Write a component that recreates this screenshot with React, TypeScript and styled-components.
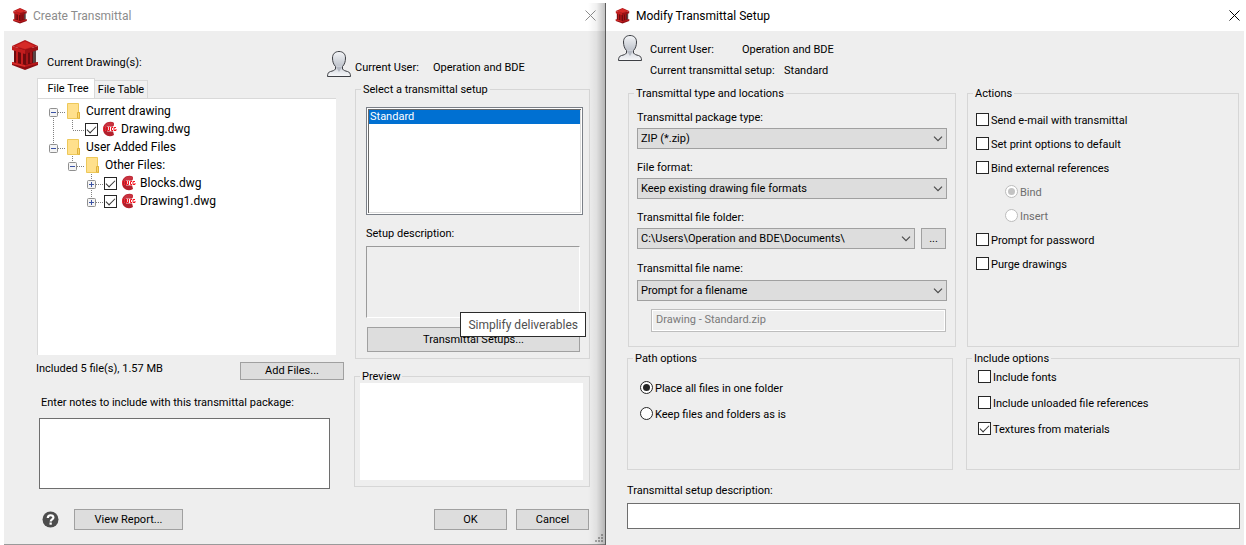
import React from "react";
import styled, { createGlobalStyle, css } from "styled-components";

const UI_FONT = `Roboto, "Noto Sans", sans-serif`;

const GlobalStyle = createGlobalStyle`
  *, *::before, *::after { box-sizing: border-box; }
  body {
    margin: 0;
    background: #fff;
    color: #000;
    font: 11px/16px ${UI_FONT};
  }
  button, input, select, textarea { font: inherit; color: inherit; margin: 0; border-radius: 0; }
`;

/* ---------- windows ---------- */

const Desktop = styled.main`
  display: flex;
  min-height: 100vh;
`;

const Window = styled.section<{ $grow: number }>`
  flex: ${(p) => p.$grow} 1 0;
  min-width: 0;
  display: flex;
  flex-direction: column;
`;

const BackWindow = styled(Window)`
  position: relative;
  padding-left: 4px;
  &::after {
    content: "";
    position: absolute;
    top: 3px;
    right: 0;
    bottom: 0;
    width: 18px;
    border-right: 1px solid #5c5c5c;
    background: linear-gradient(to right, rgba(0, 0, 0, 0), rgba(0, 0, 0, 0.06) 50%, rgba(0, 0, 0, 0.24));
    pointer-events: none;
  }
`;

const FrontWindow = styled(Window)`
  padding-right: 2px;
`;

const TitleBar = styled.header<{ $inactive?: boolean }>`
  display: flex;
  align-items: center;
  gap: 6px;
  height: 31px;
  padding: 0 ${(p) => (p.$inactive ? 10 : 4)}px 0 9px;
  font-size: 12px;
  color: ${(p) => (p.$inactive ? "#8c8c8c" : "#000")};
`;

const Title = styled.h1`
  flex: 1;
  margin: 0;
  font: inherit;
`;

const CloseButton = styled.button`
  display: flex;
  padding: 0;
  border: 0;
  background: none;
`;

const Body = styled.div`
  flex: 1;
  background: #eeeeee;
`;

const BackBody = styled(Body)`
  border-bottom: 1px solid #9a9a9a;
`;

/* ---------- shared controls ---------- */

const Button = styled.button<{ $width?: number; $height?: number }>`
  width: ${(p) => (p.$width ? `${p.$width}px` : "auto")};
  height: ${(p) => p.$height ?? 21}px;
  padding: 0;
  border: 1px solid #a0a0a0;
  background: #dddddd;
  text-align: center;
`;

const Group = styled.fieldset`
  min-width: 0;
  margin: 0;
  padding: 0 5px;
  border: 1px solid #d6d6d6;
`;

const Legend = styled.legend`
  padding: 0 2px;
  height: 14px;
`;

const Caption = styled.label`
  display: block;
  height: 14px;
`;

const markBase = css`
  appearance: none;
  flex: none;
  display: grid;
  place-items: center;
  width: 13px;
  height: 13px;
  background: #fff;
  border: 1px solid #262626;
`;

const CheckBox = styled.input.attrs({ type: "checkbox" })`
  ${markBase}
  &:checked::after {
    content: "";
    width: 9px;
    height: 5px;
    border: solid #333;
    border-width: 0 0 1px 1px;
    transform: translate(0, -1px) rotate(-45deg);
  }
`;

const Radio = styled.input.attrs({ type: "radio" })`
  ${markBase}
  border-radius: 50%;
  &:checked::after {
    content: "";
    width: 7px;
    height: 7px;
    border-radius: 50%;
    background: #262626;
  }
  &:disabled { border-color: #bcbcbc; }
  &:disabled::after { background: #c3c3c3; }
`;

const OptionLabel = styled.label<{ $indent?: boolean; $disabled?: boolean }>`
  display: flex;
  align-items: flex-start;
  gap: 2px;
  height: 14px;
  margin-left: ${(p) => (p.$indent ? 29 : 0)}px;
  color: ${(p) => (p.$disabled ? "#6d6d6d" : "inherit")};
`;

const OptionList = styled.div<{ $gap: number; $top: number; $left: number }>`
  display: flex;
  flex-direction: column;
  gap: ${(p) => p.$gap}px;
  padding: ${(p) => p.$top}px 0 0 ${(p) => p.$left}px;
`;

const SelectFrame = styled.div`
  flex: 1;
  display: grid;
  align-items: center;
  > * { grid-area: 1 / 1; }
  > svg { justify-self: end; margin-right: 4px; pointer-events: none; }
`;

const Select = styled.select`
  appearance: none;
  width: 100%;
  height: 21px;
  padding: 0 20px 0 3px;
  border: 1px solid #a0a0a0;
  background: #dddddd;
`;

/* ---------- create transmittal ---------- */

const CreateHeader = styled.div`
  display: grid;
  grid-template-columns: 315fr 263fr;
  height: 47px;
  padding: 9px 16px 0 8px;
`;

const DrawingHeading = styled.div`
  display: flex;
  gap: 9px;
  span { padding-top: 15px; }
`;

const UserHeading = styled.div`
  display: flex;
  gap: 4px;
  padding-top: 11px;
`;

const Facts = styled.dl`
  margin: 0;
  padding-top: 9px;
`;

const Fact = styled.div<{ $label: number }>`
  display: grid;
  grid-template-columns: ${(p) => p.$label}px auto;
  height: 14px;
  dd { margin: 0; }
`;

const CreateColumns = styled.div`
  display: grid;
  grid-template-columns: 350fr 236fr;
  padding-right: 16px;
`;

const Tabs = styled.div`
  display: flex;
  align-items: flex-end;
  margin-left: 33px;
`;

const Tab = styled.button<{ $active?: boolean }>`
  width: ${(p) => (p.$active ? 58 : 53)}px;
  height: ${(p) => (p.$active ? 20 : 18)}px;
  padding: ${(p) => (p.$active ? "0 0 0 4px" : "0")};
  border: 1px solid #d9d9d9;
  border-width: ${(p) => (p.$active ? "1px 1px 0 1px" : "1px 1px 0 0")};
  background: ${(p) => (p.$active ? "#fff" : "#f0f0f0")};
  white-space: nowrap;
`;

const TreePanel = styled.div`
  height: 257px;
  margin: 0 18px 0 33px;
  padding: 3px 0 0 6px;
  border: solid #d9d9d9;
  border-width: 1px 0 0 1px;
  background: #fff;
  font-size: 12px;
  line-height: 18px;
`;

const TreeRow = styled.div`
  display: flex;
  align-items: center;
  height: 18px;
`;

const TreeItem = styled.label<{ $folder?: boolean }>`
  display: flex;
  align-items: center;
  gap: ${(p) => (p.$folder ? 6 : 4)}px;
  margin-left: ${(p) => (p.$folder ? 4 : 3)}px;
`;

const StatusRow = styled.div`
  display: flex;
  justify-content: space-between;
  padding: 7px 10px 0 32px;
  line-height: 14px;
`;

const NotesField = styled.div`
  display: flex;
  flex-direction: column;
  gap: 9px;
  padding: 15px 24px 0 35px;
  label { padding-left: 2px; }
`;

const Notes = styled.textarea`
  width: 100%;
  height: 71px;
  resize: none;
  border: 1px solid #6e6e6e;
  background: #fff;
`;

const SetupColumn = styled.div`
  display: flex;
  flex-direction: column;
  gap: 10px;
  padding-top: 4px;
`;

const SetupGroup = styled(Group)`
  height: 277px;
  margin-left: 1px;
`;

const SetupStack = styled.div`
  position: relative;
  display: flex;
  flex-direction: column;
  padding: 11px 1px 0 5px;
`;

const ListBox = styled.select`
  height: 108px;
  padding: 2px;
  border: 1px solid #7a7f87;
  outline: none;
  box-shadow: inset 0 0 0 1px #fff, inset 2px 2px 0 #696969, inset -2px -2px 0 #dcdcdc;
  background: #fff;
  overflow: hidden;
  option {
    min-height: 14px;
    padding: 0 1px;
    line-height: 14px;
  }
  option:checked {
    color: #fff;
    background: #0070d2 linear-gradient(#0070d2, #0070d2);
  }
`;

const Description = styled.textarea`
  height: 72px;
  margin: 6px 3px 9px 0;
  resize: none;
  border: 1px solid;
  border-color: #9a9a9a #fff #fff #9a9a9a;
  background: #eeeeee;
`;

const SetupLabel = styled(Caption)`
  margin-top: 11px;
`;

const SetupsButton = styled(Button)`
  margin: 0 3px 0 1px;
`;

const Tooltip = styled.div`
  position: absolute;
  right: -2px;
  bottom: 15px;
  padding: 4px 7px 3px;
  border: 1px solid #2b2b2b;
  background: #fff;
  color: #4f4f4f;
  font-size: 12px;
  white-space: nowrap;
`;

const PreviewArea = styled.div`
  height: 97px;
  margin: 0 1px 6px 0;
  background: #fff;
`;

const CreateFooter = styled.footer`
  display: flex;
  align-items: center;
  gap: 9px;
  padding: 20px 17px 0 38px;
`;

const HelpButton = styled.button`
  display: flex;
  margin-right: 6px;
  padding: 0;
  border: 0;
  background: none;
`;

const Spacer = styled.span`
  flex: 1;
`;

const GripRow = styled.div`
  display: flex;
  justify-content: flex-end;
  padding: 4px 3px 2px 0;
`;

/* ---------- modify transmittal setup ---------- */

const ModifyHeader = styled.div`
  display: flex;
  gap: 8px;
  padding: 4px 0 9px 12px;
  dl { display: grid; gap: 7px; padding-top: 7px; }
`;

const ModifyGrid = styled.div`
  display: grid;
  grid-template-columns: 329fr 274fr;
  gap: 4px 10px;
  padding: 0 4px 0 21px;
`;

const TypeGroup = styled(Group)`
  height: 261px;
  margin-left: 1px;
`;

const ActionsGroup = styled(Group)`
  margin: 0 1px;
`;

const PathGroup = styled(Group)`
  height: 119px;
  margin-right: 3px;
`;

const TypeFields = styled.div`
  display: flex;
  flex-direction: column;
  gap: 11px;
  padding: 10px 3px 0;
`;

const Field = styled.div`
  display: flex;
  flex-direction: column;
  gap: 4px;
`;

const NameField = styled(Field)`
  gap: 5px;
  padding-top: 1px;
`;

const FolderRow = styled.div`
  display: flex;
  gap: 6px;
  padding-right: 1px;
`;

const FileName = styled.input`
  height: 23px;
  margin: 3px 1px 0 14px;
  padding: 0 4px 2px;
  border: 1px solid #bdbdbd;
  box-shadow: inset 0 0 0 1px #fff;
  background: #eeeeee;
  &:disabled { color: #7a7a7a; }
`;

const DescriptionField = styled.div`
  display: flex;
  flex-direction: column;
  gap: 6px;
  padding: 13px 4px 16px 21px;
`;

const DescriptionInput = styled.input`
  width: 100%;
  height: 26px;
  border: 1px solid #6e6e6e;
  background: #fff;
`;

/* ---------- drawings ---------- */

const PillarIcon = ({ width, height }: { width: number; height: number }) => (
  <svg width={width} height={height} viewBox="0 0 26 31" aria-hidden="true">
    <path d="M2 8h21v16l-10 4-11-4z" fill="#6d0a0e" />
    <path d="M21 10h3v13h-3z" fill="#5a4444" />
    <path d="M4 10h2v13H4zM9 11h2v13H9z" fill="#c41d1e" />
    <path d="M14 11h2v13h-2zM18 10h2v13h-2z" fill="#a81519" />
    <path d="M0 6l13 4v4L0 10z" fill="#c41d1e" />
    <path d="M26 6l-13 4v4l13-4z" fill="#9c1115" />
    <path d="M0 6L13 0l13 6-13 4z" fill="#b3171a" />
    <path d="M3 6l10-4.500L23 6l-10 3z" fill="#d62a27" />
    <path d="M0 22l13 3 13-3v3l-13 5-13-5z" fill="#8d0d12" />
    <path d="M0 22l13 3v2L0 24z" fill="#d62a27" />
    <path d="M26 22l-13 3v2l13-3z" fill="#b8181b" />
  </svg>
);

const UserIcon = () => (
  <svg width="24" height="26" viewBox="0 0 24 26" aria-hidden="true">
    <defs>
      <linearGradient id="bust" x1="0" y1="0" x2="0" y2="1">
        <stop offset="0" stopColor="#f4f6f8" />
        <stop offset="0.55" stopColor="#c3c7cf" />
        <stop offset="0.75" stopColor="#dfe2e7" />
        <stop offset="1" stopColor="#f7f8fa" />
      </linearGradient>
    </defs>
    <path
      d="M12 .5C8 .5 5.500 3 5.500 7c0 3.500 1 6.500 3 8.500V18c-1 1.500-3 2-5 2.500S.5 22.500.5 25.500h23c0-3-1-4.500-3-5s-4-1-5-2.500v-2.500c2-2 3-5 3-8.500 0-4-2.500-6.500-6.500-6.500z"
      fill="url(#bust)"
      stroke="#3d3f44"
    />
    <path d="M9 16l3 5 3-5" fill="#b4b9c3" />
  </svg>
);

const CloseIcon = () => (
  <svg width="11" height="11" viewBox="0 0 11 11" aria-hidden="true">
    <path d="M.5.5l10 10M10.500.5l-10 10" stroke="currentColor" fill="none" />
  </svg>
);

const Chevron = () => (
  <svg width="10" height="6" viewBox="0 0 10 6" aria-hidden="true">
    <path d="M1 .7l4 4 4-4" stroke="#4a4a4a" strokeWidth="1.200" fill="none" />
  </svg>
);

const FolderIcon = () => (
  <svg width="13" height="16" viewBox="0 0 13 16" aria-hidden="true">
    <path d="M.5.5h11v9h1v6H.5z" fill="#ffe08c" stroke="#edc85a" />
    <path d="M10.500 15V9.500h2v6z" fill="#fdd66d" stroke="#dfb23d" />
  </svg>
);

const DwgIcon = () => (
  <svg width="15" height="16" viewBox="0 0 15 16" aria-hidden="true">
    <path d="M12 2C8-1 1 2 1 8s6 9 11 6l-1-4H7V6h4z" fill="#b3202c" />
    <path d="M12 2C8 0 3 2 2 6h6c1-1 2-2 4-1z" fill="#c93340" />
    <path d="M5 5.500h9v5H5z" fill="#fff" opacity="0.8" />
    <path d="M1 6.500h1M1 9.500h1M3 6.500h1M3 9.500h1M1 8h1M3 8h1" stroke="#ff2a35" />
    <path
      d="M5.500 6v3.500h2V6M11 6.500H9.500v3h1.500M14 6.500h-2v3h2V8"
      fill="none"
      stroke="#f3101c"
    />
  </svg>
);

const HelpIcon = () => (
  <svg width="17" height="17" viewBox="0 0 17 17" aria-hidden="true">
    <circle cx="8.500" cy="8.500" r="8" fill="#4d4d4d" />
    <path d="M5.800 7c0-3.600 5.600-3.600 5.600-.5 0 2-2.700 1.800-2.700 4" fill="none" stroke="#fff" strokeWidth="2.200" />
    <rect x="7.500" y="11.500" width="2.300" height="2.200" fill="#fff" />
  </svg>
);

const Grip = () => (
  <svg width="8" height="8" viewBox="0 0 8 8" aria-hidden="true">
    <path d="M6 0h2v2H6zM3 3h2v2H3zM6 3h2v2H6zM0 6h2v2H0zM3 6h2v2H3zM6 6h2v2H6z" fill="#a8a8a8" />
  </svg>
);

/* One 19px step of the tree's guide lines: t = up, b = down, r = right, "-" / "+" = expander. */
const Guide = ({ parts }: { parts: string }) => (
  <svg width="19" height="18" viewBox="0 0 19 18" overflow="visible" aria-hidden="true">
    <g stroke="#808080" strokeDasharray="1 1" fill="none">
      {parts.includes("t") && <path d="M9.500 0V10" />}
      {parts.includes("b") && <path d="M9.500 10V18" />}
      {parts.includes("r") && <path d="M10 10.500H22" />}
    </g>
    {/[-+]/.test(parts) && (
      <>
        <rect x="5.500" y="6.500" width="8" height="8" rx="1" fill="#f4f4f4" stroke="#8f8f8f" />
        <path d={parts.includes("+") ? "M7 10.500h5M9.500 8v5" : "M7 10.500h5"} stroke="#3b53a4" />
      </>
    )}
  </svg>
);

/* ---------- data ---------- */

type Node = { name: string; guides: string[]; folder?: boolean };

const TREE: Node[] = [
  { name: "Current drawing", guides: ["-br"], folder: true },
  { name: "Drawing.dwg", guides: ["tb", "tr"] },
  { name: "User Added Files", guides: ["-tr"], folder: true },
  { name: "Other Files:", guides: ["", "-tr"], folder: true },
  { name: "Blocks.dwg", guides: ["", "", "+tbr"] },
  { name: "Drawing1.dwg", guides: ["", "", "+tr"] },
];

const DropDown = ({ id, value }: { id: string; value: string }) => (
  <SelectFrame>
    <Select id={id} defaultValue={value}>
      <option>{value}</option>
    </Select>
    <Chevron />
  </SelectFrame>
);

const Check = ({ text, checked }: { text: string; checked?: boolean }) => (
  <OptionLabel>
    <CheckBox defaultChecked={checked} />
    {text}
  </OptionLabel>
);

const CreateTransmittal = () => (
  <BackWindow $grow={602}>
    <TitleBar $inactive>
      <PillarIcon width={14} height={16} />
      <Title>Create Transmittal</Title>
      <CloseButton aria-label="Close"><CloseIcon /></CloseButton>
    </TitleBar>
    <BackBody>
      <CreateHeader>
        <DrawingHeading>
          <PillarIcon width={26} height={31} />
          <span>Current Drawing(s):</span>
        </DrawingHeading>
        <UserHeading>
          <UserIcon />
          <Facts>
            <Fact $label={78}><dt>Current User:</dt><dd>Operation and BDE</dd></Fact>
          </Facts>
        </UserHeading>
      </CreateHeader>
      <CreateColumns>
        <div>
          <Tabs role="tablist">
            <Tab $active role="tab" aria-selected="true">File Tree</Tab>
            <Tab role="tab" aria-selected="false">File Table</Tab>
          </Tabs>
          <TreePanel>
            {TREE.map((node) => (
              <TreeRow key={node.name}>
                {node.guides.map((parts, i) => <Guide key={i} parts={parts} />)}
                {node.folder ? (
                  <TreeItem as="div" $folder><FolderIcon />{node.name}</TreeItem>
                ) : (
                  <TreeItem><CheckBox defaultChecked /><DwgIcon />{node.name}</TreeItem>
                )}
              </TreeRow>
            ))}
          </TreePanel>
          <StatusRow>
            <span>Included 5 file(s), 1.57 MB</span>
            <Button $width={104} $height={18}>Add Files...</Button>
          </StatusRow>
          <NotesField>
            <Caption htmlFor="notes">Enter notes to include with this transmittal package:</Caption>
            <Notes id="notes" />
          </NotesField>
        </div>
        <SetupColumn>
          <SetupGroup>
            <Legend>Select a transmittal setup</Legend>
            <SetupStack>
              <ListBox size={7} defaultValue="Standard" aria-label="Transmittal setup">
                <option>Standard</option>
              </ListBox>
              <SetupLabel htmlFor="setup-note">Setup description:</SetupLabel>
              <Description id="setup-note" readOnly />
              <SetupsButton $height={25}>Transmittal Setups...</SetupsButton>
              <Tooltip role="tooltip">Simplify deliverables</Tooltip>
            </SetupStack>
          </SetupGroup>
          <Group>
            <Legend>Preview</Legend>
            <PreviewArea />
          </Group>
        </SetupColumn>
      </CreateColumns>
      <CreateFooter>
        <HelpButton aria-label="Help"><HelpIcon /></HelpButton>
        <Button $width={109}>View Report...</Button>
        <Spacer />
        <Button $width={73}>OK</Button>
        <Button $width={73}>Cancel</Button>
      </CreateFooter>
      <GripRow><Grip /></GripRow>
    </BackBody>
  </BackWindow>
);

const ModifySetup = () => (
  <FrontWindow $grow={638}>
    <TitleBar>
      <PillarIcon width={15} height={16} />
      <Title>Modify Transmittal Setup</Title>
      <CloseButton aria-label="Close"><CloseIcon /></CloseButton>
    </TitleBar>
    <Body>
      <ModifyHeader>
        <UserIcon />
        <Facts>
          <Fact $label={92}><dt>Current User:</dt><dd>Operation and BDE</dd></Fact>
          <Fact $label={134}><dt>Current transmittal setup:</dt><dd>Standard</dd></Fact>
        </Facts>
      </ModifyHeader>
      <ModifyGrid>
        <TypeGroup>
          <Legend>Transmittal type and locations</Legend>
          <TypeFields>
            <Field>
              <Caption htmlFor="package">Transmittal package type:</Caption>
              <DropDown id="package" value="ZIP (*.zip)" />
            </Field>
            <Field>
              <Caption htmlFor="format">File format:</Caption>
              <DropDown id="format" value="Keep existing drawing file formats" />
            </Field>
            <Field>
              <Caption htmlFor="folder">Transmittal file folder:</Caption>
              <FolderRow>
                <DropDown id="folder" value="C:\Users\Operation and BDE\Documents\" />
                <Button $width={25} aria-label="Browse">...</Button>
              </FolderRow>
            </Field>
            <NameField>
              <Caption htmlFor="naming">Transmittal file name:</Caption>
              <DropDown id="naming" value="Prompt for a filename" />
              <FileName disabled aria-label="File name" defaultValue="Drawing - Standard.zip" />
            </NameField>
          </TypeFields>
        </TypeGroup>
        <ActionsGroup>
          <Legend>Actions</Legend>
          <OptionList $gap={10} $top={13} $left={3}>
            <Check text="Send e-mail with transmittal" />
            <Check text="Set print options to default" />
            <Check text="Bind external references" />
            <OptionLabel $indent $disabled><Radio name="bind" disabled defaultChecked />Bind</OptionLabel>
            <OptionLabel $indent $disabled><Radio name="bind" disabled />Insert</OptionLabel>
            <Check text="Prompt for password" />
            <Check text="Purge drawings" />
          </OptionList>
        </ActionsGroup>
        <PathGroup>
          <Legend>Path options</Legend>
          <OptionList $gap={12} $top={16} $left={7}>
            <OptionLabel><Radio name="path" defaultChecked />Place all files in one folder</OptionLabel>
            <OptionLabel><Radio name="path" />Keep files and folders as is</OptionLabel>
          </OptionList>
        </PathGroup>
        <Group>
          <Legend>Include options</Legend>
          <OptionList $gap={12} $top={5} $left={6}>
            <Check text="Include fonts" />
            <Check text="Include unloaded file references" />
            <Check text="Textures from materials" checked />
          </OptionList>
        </Group>
      </ModifyGrid>
      <DescriptionField>
        <Caption htmlFor="description">Transmittal setup description:</Caption>
        <DescriptionInput id="description" />
      </DescriptionField>
    </Body>
  </FrontWindow>
);

export default function App() {
  return (
    <>
      <GlobalStyle />
      <Desktop>
        <CreateTransmittal />
        <ModifySetup />
      </Desktop>
    </>
  );
}
